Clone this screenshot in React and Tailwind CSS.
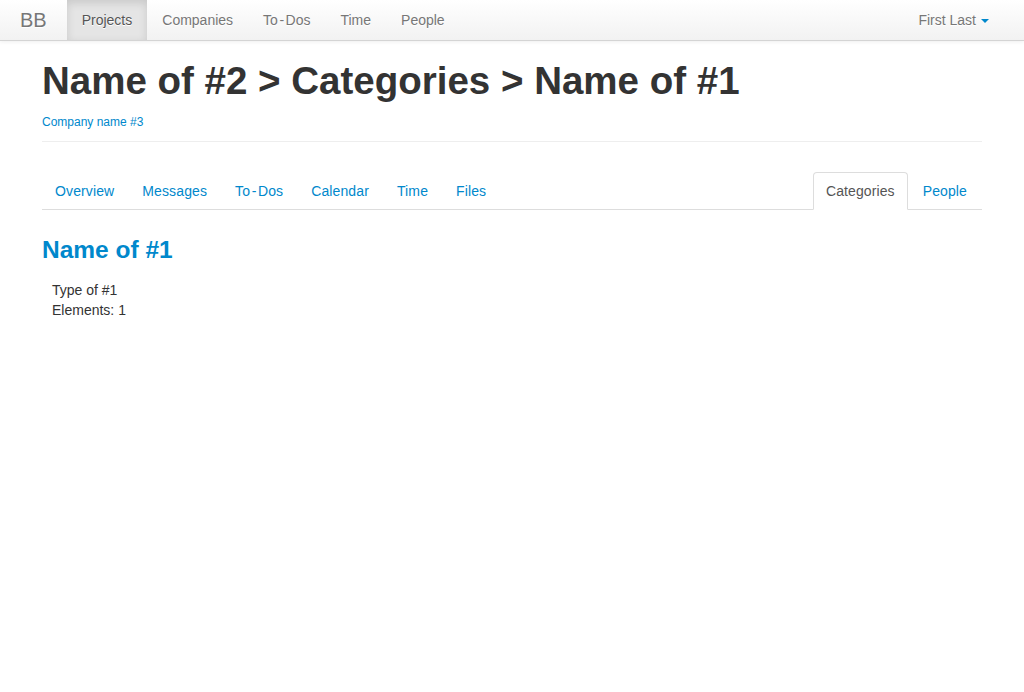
const Dash = () => <span className="px-[1.5px]">-</span>

export default function App() {
    const mainNav = ['Projects', 'Companies', 'To-Dos', 'Time', 'People']
    const leftTabs = ['Overview', 'Messages', 'To-Dos', 'Calendar', 'Time', 'Files']

    // hyphen in this font renders a little wider than Liberation's
    const label = (text) =>
        text.includes('-') ? (
            <>
                {text.split('-')[0]}
                <Dash />
                {text.split('-')[1]}
            </>
        ) : (
            text
        )

    return (
        <div className="min-h-[692px] bg-white text-[#333] text-[14px] leading-[20px]" style={{ fontFamily: '"Liberation Sans", Helvetica, Arial, sans-serif' }}>
            {/* top navbar */}
            <div className="h-[41px] border-b border-[#d4d4d4] bg-gradient-to-b from-[#ffffff] to-[#f2f2f2] shadow-[0_1px_4px_rgba(0,0,0,0.065)] px-[20px] flex items-start">
                <a className="ml-[-20px] px-[20px] py-[10px] text-[20px] leading-[20px] text-[#777] [text-shadow:0_1px_0_#fff]">BB</a>
                <ul className="flex">
                    {mainNav.map((item, i) => (
                        <li key={item}>
                            <a
                                className={
                                    i === 0
                                        ? 'block px-[15px] py-[10px] text-[#555] bg-[#e5e5e5] shadow-[inset_0_3px_8px_rgba(0,0,0,0.125)] [text-shadow:0_1px_0_#fff]'
                                        : 'block px-[15px] py-[10px] text-[#777] [text-shadow:0_1px_0_#fff]'
                                }
                            >
                                {label(item)}
                            </a>
                        </li>
                    ))}
                </ul>
                <a className="ml-auto px-[15px] py-[10px] text-[#777] flex items-center [text-shadow:0_1px_0_#fff]">
                    First Last
                    <span className="ml-[5px] mt-[1px] w-0 h-0 border-t-[4px] border-t-[#0088cc] border-x-[4px] border-x-transparent"></span>
                </a>
            </div>

            <div className="w-[940px] mx-auto">
                {/* page header */}
                <div className="mt-[20px] mb-[30px] pb-[9px] border-b border-[#eeeeee]">
                    <h1 className="text-[38.5px] leading-[40px] font-bold mb-[11px]">Name of #2 &gt; Categories &gt; Name of #1</h1>
                    <a className="block text-[12px] leading-[20px] text-[#0088cc]">Company name #3</a>
                </div>

                {/* tabs */}
                <ul className="flex border-b border-[#dddddd] mb-[20px] tracking-[0.12px]">
                    {leftTabs.map((tab) => (
                        <li key={tab} className="mb-[-1px]">
                            <a className="block mr-[2px] px-[12px] py-[8px] border border-transparent rounded-t-[4px] text-[#0088cc]">{label(tab)}</a>
                        </li>
                    ))}
                    <li className="mb-[-1px] ml-auto">
                        <a className="block mr-[2px] px-[12px] py-[8px] border border-[#dddddd] border-b-white bg-white rounded-t-[4px] text-[#555] tracking-[0.1px]">Categories</a>
                    </li>
                    <li className="mb-[-1px]">
                        <a className="block mr-[2px] px-[12px] py-[8px] border border-transparent rounded-t-[4px] text-[#0088cc]">People</a>
                    </li>
                </ul>

                {/* category detail */}
                <h3 className="text-[24.5px] leading-[40px] font-bold text-[#0088cc] mt-[10px] mb-[10px]">Name of #1</h3>
                <div className="pl-[10px]">
                    <div>Type of #1</div>
                    <div>Elements: 1</div>
                </div>
            </div>
        </div>
    )
}
